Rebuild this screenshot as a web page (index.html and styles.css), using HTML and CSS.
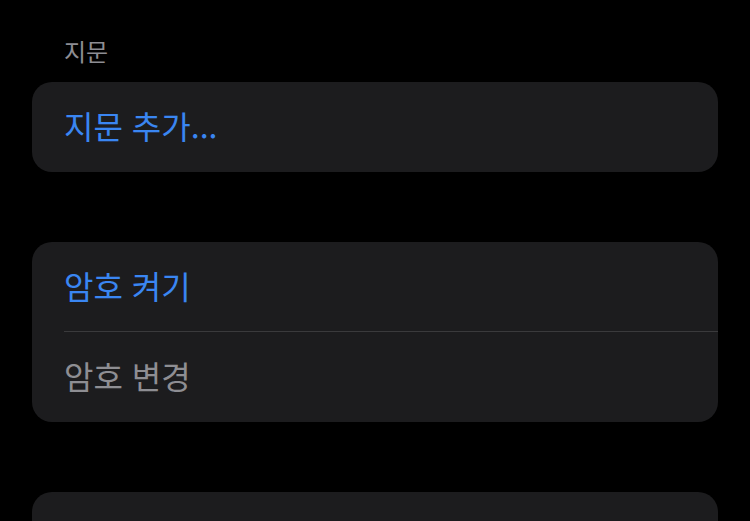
FILE: index.html
```html
<!DOCTYPE html>
<html lang="ko">
<head>
<meta charset="utf-8">
<link rel="stylesheet" href="styles.css">
</head>
<body>
<div class="page">
  <div class="section-header">지문</div>
  <div class="card">
    <div class="row blue">지문 추가...</div>
  </div>
  <div class="card">
    <div class="row blue">암호 켜기</div>
    <div class="sep"></div>
    <div class="row gray">암호 변경</div>
  </div>
  <div class="card">
    <div class="row"></div>
  </div>
</div>
</body>
</html>
```
FILE: styles.css
```css
html, body {
  margin: 0;
  padding: 0;
  background: #000;
  height: 100%;
  overflow: hidden;
}
.page {
  padding: 37px 32px 0 32px;
  display: flex;
  flex-direction: column;
  font-family: "Noto Sans CJK KR", "Noto Sans", sans-serif;
}
.section-header {
  padding-left: 32px;
  font-size: 24px;
  line-height: 28px;
  color: #8d8d93;
  margin-bottom: 17px;
}
.card {
  background: #1c1c1e;
  border-radius: 20px;
  margin-bottom: 70px;
  display: flex;
  flex-direction: column;
}
.row {
  height: 90px;
  box-sizing: border-box;
  padding: 0 0 4px 32px;
  display: flex;
  align-items: center;
  font-size: 32px;
}
.card .row:first-child:not(:only-child) {
  height: 89px;
}
.blue { color: #3a86f2; }
.gray { color: #8e8e93; }
.sep {
  height: 1px;
  margin-left: 32px;
  background: #3a3a3c;
}
```
